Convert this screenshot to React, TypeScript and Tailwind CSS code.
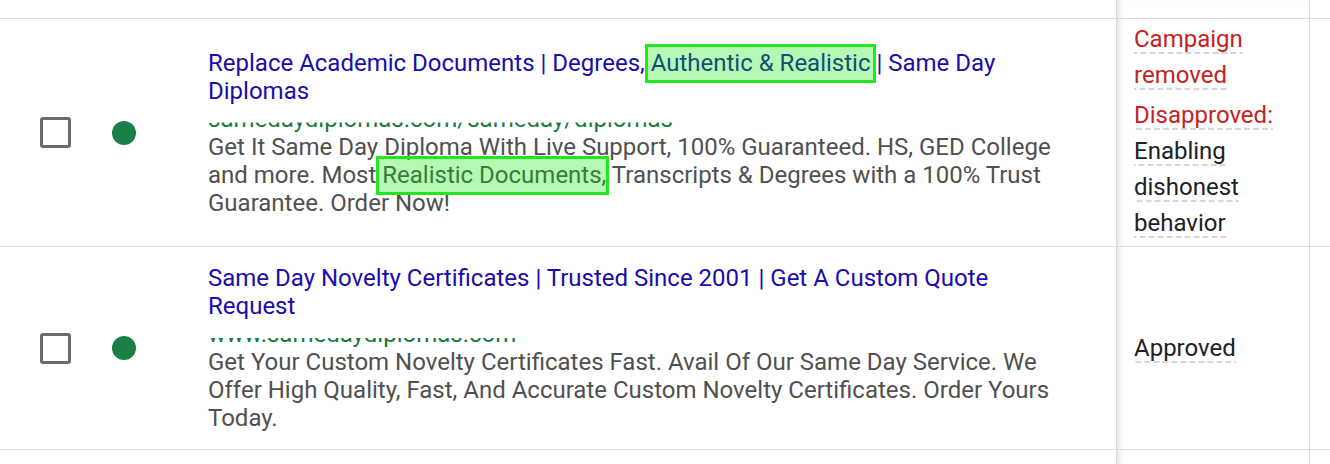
import type { ReactNode } from 'react';

type Ad = {
  title: ReactNode;
  url: string;
  description: ReactNode;
  status: ReactNode;
  height: string;
};

// green review highlight drawn over a phrase
function Hl({ children, right = '-right-[3px]' }: { children: ReactNode; right?: string }) {
  return (
    <span className="relative">
      {children}
      <span
        className={`absolute -left-[6px] ${right} -top-[5px] -bottom-[6px] border-[3px] border-[#22e622] bg-[rgba(0,235,0,0.29)]`}
      />
    </span>
  );
}

function Dash({ children }: { children: ReactNode }) {
  return (
    <span className="bg-[linear-gradient(to_right,#d7d7d7_66%,transparent_66%)] bg-[length:9px_2px] bg-bottom bg-repeat-x pb-[1px]">
      {children}
    </span>
  );
}

const ads: Ad[] = [
  {
    title: (
      <>
        Replace Academic Documents | Degrees, <Hl right="right-0">Authentic &amp; Realistic </Hl>| Same Day
        Diplomas
      </>
    ),
    url: 'samedaydiplomas.com/sameday/diplomas',
    description: (
      <>
        Get It Same Day Diploma With Live Support, 100% Guaranteed. HS, GED College and more. Most{' '}
        <Hl>Realistic Documents,</Hl> Transcripts &amp; Degrees with a 100% Trust Guarantee. Order Now!
      </>
    ),
    status: (
      <div className="w-[150px] pb-[4px]">
        <div className="text-[#c5221f]">
          <Dash>Campaign removed</Dash>
        </div>
        <div className="mt-[4px] text-[#c5221f]">
          <Dash>Disapproved:</Dash>
        </div>
        <div className="text-[#202124]">
          <Dash>Enabling dishonest behavior</Dash>
        </div>
      </div>
    ),
    height: 'h-[228px]',
  },
  {
    title: <>Same Day Novelty Certificates | Trusted Since 2001 | Get A Custom Quote Request</>,
    url: 'www.samedaydiplomas.com',
    description: (
      <>
        Get Your Custom Novelty Certificates Fast. Avail Of Our Same Day Service. We Offer High Quality, Fast, And
        Accurate Custom Novelty Certificates. Order Yours Today.
      </>
    ),
    status: (
      <div className="text-[#202124]">
        <Dash>Approved</Dash>
      </div>
    ),
    height: 'h-[203px]',
  },
];

function Cells({ left, status, className }: { left?: ReactNode; status?: ReactNode; className: string }) {
  return (
    <div className={`flex ${className}`}>
      <div className="flex w-[1116px] shrink-0 items-center">{left}</div>
      <div className="flex w-[193px] shrink-0 items-center border-l border-[#dadce0] pl-[17px] shadow-[inset_7px_0_6px_-5px_rgba(0,0,0,0.13)]">
        {status}
      </div>
      <div className="flex-1 border-l border-[#dadce0]" />
    </div>
  );
}

export default function App() {
  return (
    <div className="h-[464px] w-[1330px] overflow-hidden bg-white font-['Roboto',sans-serif] text-[24px] leading-[28px]">
      <Cells className="h-[18px]" />
      {ads.map((ad, i) => (
        <Cells
          key={i}
          className={`${ad.height} border-t border-[#dadce0]`}
          left={
            <>
              <div className="ml-[40px] h-[31px] w-[31px] shrink-0 rounded-[3px] border-[3px] border-[#6b6b6b]" />
              <div className="ml-[41px] h-[24px] w-[24px] shrink-0 rounded-full bg-[#1a7f45]" />
              <div className="ml-[72px] w-[860px]">
                <div className="text-[#1a0dab]">{ad.title}</div>
                <div className="h-[28px] whitespace-nowrap text-[#1a7a3c] [clip-path:inset(18px_0_0_0)]">{ad.url}</div>
                <div className="text-[#505050]">{ad.description}</div>
              </div>
            </>
          }
          status={<div className="leading-[36px]">{ad.status}</div>}
        />
      ))}
      <Cells className="h-[20px] border-t border-[#dadce0]" />
    </div>
  );
}
